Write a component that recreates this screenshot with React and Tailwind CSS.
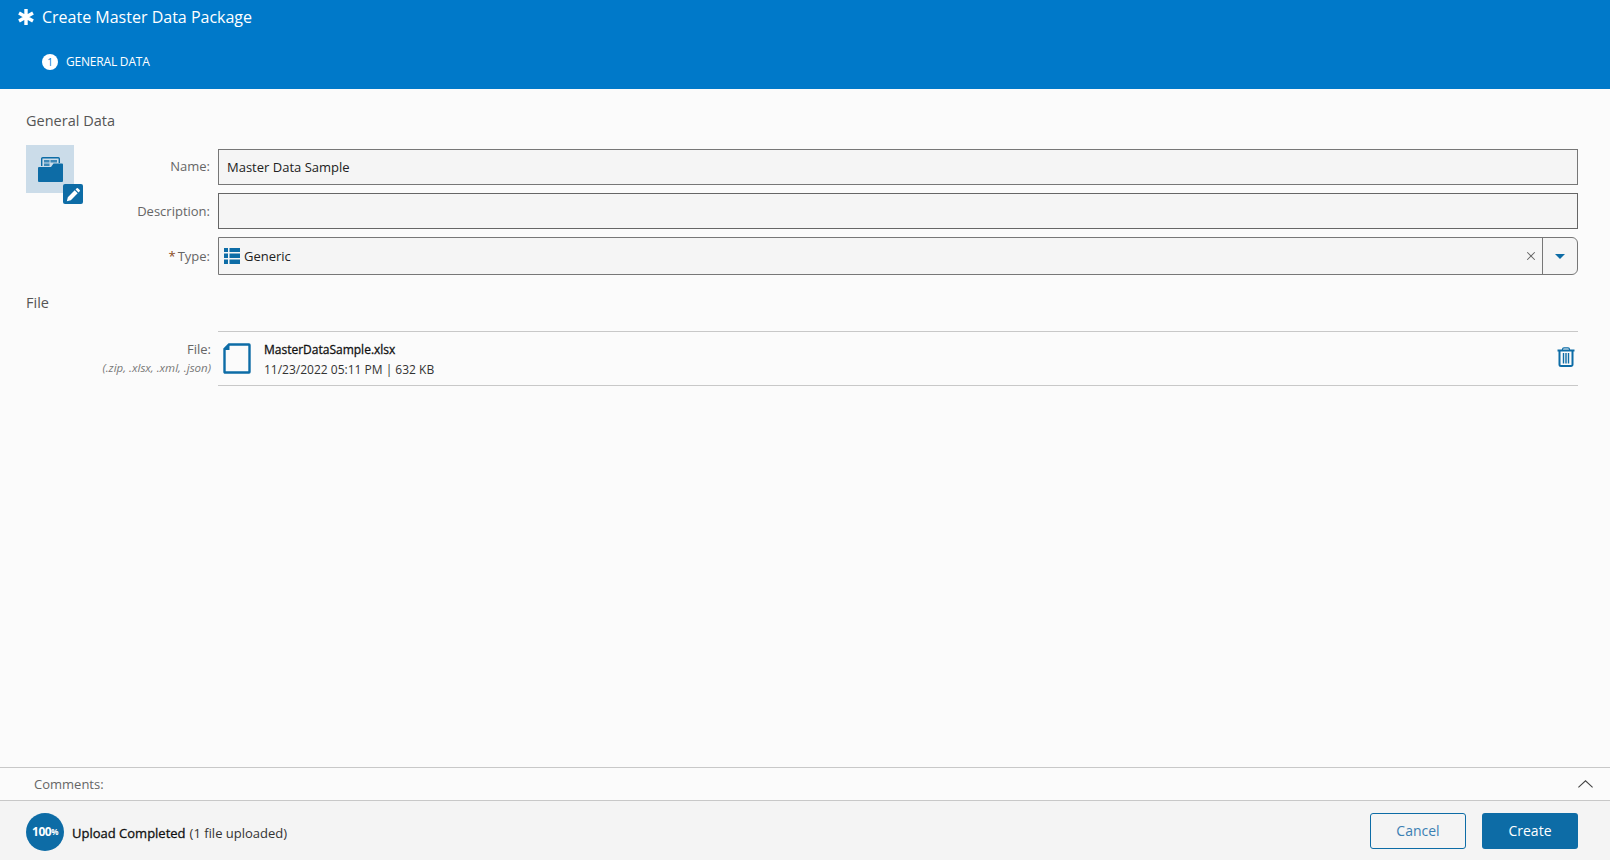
import React from 'react'
import { X } from 'lucide-react'

const font = 'font-["Open_Sans","Noto_Sans",sans-serif]'

function FormRow({ label, required, className, children, labelClass = '' }) {
  return (
    <div className={`flex items-center ${className}`}>
      <label className={`w-[128px] pr-2 text-right text-[13px] text-[#666] ${labelClass}`}>
        {required && <span className="mr-0.5 text-[#8a4b20]">*</span>}
        {label}
      </label>
      <div className="flex-1">{children}</div>
    </div>
  )
}

function FolderIcon() {
  return (
    <svg width="25" height="25" viewBox="0 0 25 25">
      <path d="M3.700 9V1.700A1 1 0 0 1 4.700.7h15.600a1 1 0 0 1 1 1V6" fill="none" stroke="#0d6ca6" strokeWidth="1.400" />
      <path d="M6 3h5.500v2.500H6zM12.500 3H19v2.500h-6.500zM6 6.500h5.500V9H6z" fill="#0d6ca6" opacity="0.75" />
      <path d="M0 11a1 1 0 0 1 1-1h12l2.500-3.500H24a1 1 0 0 1 1 1V24a1 1 0 0 1-1 1H1a1 1 0 0 1-1-1z" fill="#0d6ca6" />
    </svg>
  )
}

function PencilIcon() {
  return (
    <svg width="15" height="15" viewBox="0 0 14 14" fill="#fff">
      <path d="M10 1.200a.8.800 0 0 1 1.100 0l1.700 1.700a.8.800 0 0 1 0 1.100l-1.100 1.100-2.800-2.800zM8.100 3.100l2.800 2.800-6.400 6.400-3.700.9.900-3.700z" />
    </svg>
  )
}

function ListIcon() {
  return (
    <svg width="16" height="16" viewBox="0 0 16 16" fill="#0d6ca6">
      <path d="M0 0h4v4H0zM5.500 0H16v4H5.500zM0 5.500h4v4.500H0zM5.500 5.500H16v4.500H5.500zM0 11.500h4V16H0zM5.500 11.500H16V16H5.500z" />
    </svg>
  )
}

function FileIcon() {
  return (
    <svg width="28" height="31" viewBox="0 0 28 31" fill="none">
      <path d="M6 1.500h20a.5.500 0 0 1 .5.500v27a.5.500 0 0 1-.5.500H2a.5.500 0 0 1-.5-.500V6z" stroke="#0d6ca6" strokeWidth="2.400" />
      <path d="M1 7 6.500 1.500V7z" fill="#0d6ca6" />
    </svg>
  )
}

function TrashIcon() {
  return (
    <svg width="18" height="20" viewBox="0 0 18 20" fill="none" stroke="#0d6ca6">
      <path d="M5.500 3V2.200A1.500 1.500 0 0 1 7 .8h4a1.500 1.500 0 0 1 1.500 1.400V3" strokeWidth="1.200" />
      <path d="M.5 3.500h17" strokeWidth="2" />
      <path d="M2.500 4v13.500a1.500 1.500 0 0 0 1.500 1.500h10a1.500 1.500 0 0 0 1.500-1.500V4" strokeWidth="2" />
      <path d="M6.500 6v10.500M9 6v10.500M11.500 6v10.500" strokeWidth="1.400" />
    </svg>
  )
}

export default function App() {
  return (
    <div className={`flex h-[860px] w-full flex-col overflow-hidden bg-[#fbfbfb] ${font}`}>
      <header className="h-[89px] shrink-0 bg-[#0079c9] text-white">
        <div className="flex h-[34px] items-center pl-[18px]">
          <svg width="16" height="16" viewBox="0 0 16 16" stroke="#fff" strokeWidth="3.400">
            <path d="M8 0v16M1 4l14 8M15 4 1 12" />
          </svg>
          <h1 className="ml-2 text-[16px]">Create Master Data Package</h1>
        </div>
        <div className="mt-[19px] flex items-center pl-[42px]">
          <span className="flex h-4 w-4 items-center justify-center rounded-full bg-white text-[10px] text-[#0079c9]">1</span>
          <span className="ml-2 text-[12px] tracking-[-0.2px]">GENERAL DATA</span>
        </div>
      </header>

      <main className="flex-1 pl-[26px] pr-8">
        <h2 className="mt-[22px] text-[14.5px] leading-5 text-[#555]">General Data</h2>
        <div className="mt-[14px] flex">
          <div className="relative h-12 w-12 shrink-0">
            <div className="flex h-12 w-12 items-center justify-center bg-[#cbdce9]">
              <FolderIcon />
            </div>
            <div className="absolute left-[37px] top-[39px] flex h-5 w-5 items-center justify-center rounded-[2px] bg-[#0d6ca6]">
              <PencilIcon />
            </div>
          </div>
          <div className="ml-[16px] flex-1 pt-1">
            <FormRow label="Name:">
              <input
                readOnly
                value="Master Data Sample"
                className="h-9 w-full border border-[#777] bg-[#f5f5f5] px-2 text-[13px] text-[#222] outline-none"
              />
            </FormRow>
            <FormRow label="Description:" className="mt-2" labelClass="pt-[2px]">
              <input readOnly className="h-9 w-full border border-[#666] bg-[#f5f5f5] px-2 text-[13px] outline-none" />
            </FormRow>
            <FormRow label="Type:" required className="mt-2" labelClass="pt-[2px]">
              <div className="flex h-[38px] w-full items-center rounded-r-[6px] border border-[#777] bg-[#f5f5f5]">
                <span className="ml-[5px]"><ListIcon /></span>
                <span className="ml-1 flex-1 pt-[2px] text-[13px] text-[#222]">Generic</span>
                <X size={14} strokeWidth={1.800} className="mr-[4px] text-[#666]" />
                <div className="flex h-full w-[35px] items-center justify-center border-l border-[#777]">
                  <span className="h-0 w-0 border-x-[5px] border-t-[5px] border-x-transparent border-t-[#0d6ca6]" />
                </div>
              </div>
            </FormRow>
          </div>
        </div>

        <h2 className="mt-[18px] text-[14.5px] leading-5 text-[#555]">File</h2>
        <div className="mt-[18px] flex">
          <div className="w-[192px] shrink-0 pr-[7px] pt-[9px] text-right">
            <div className="text-[13px] leading-[18px] text-[#666]">File:</div>
            <div className="mt-[2px] whitespace-nowrap text-[11.5px] italic leading-4 text-[#777]">(.zip, .xlsx, .xml, .json)</div>
          </div>
          <div className="flex h-[55px] flex-1 items-center border-y border-[#c8c8c8] pl-[5px]">
            <FileIcon />
            <div className="ml-[13px] flex-1 pt-[2px]">
              <div className="text-[12px] font-medium leading-[18px] text-[#111] [-webkit-text-stroke:0.3px_#111]">MasterDataSample.xlsx</div>
              <div className="mt-[2px] text-[12px] leading-[18px] text-[#333]">11/23/2022 05:11 PM | 632 KB</div>
            </div>
            <span className="mb-[4px] mr-[3px]"><TrashIcon /></span>
          </div>
        </div>
      </main>

      <div className="flex h-[34px] shrink-0 items-center justify-between border-y border-[#c8c8c8] pl-[34px] pr-[17px]">
        <span className="pt-[2px] text-[13px] text-[#666]">Comments:</span>
        <svg width="15" height="8" viewBox="0 0 15 8" fill="none" stroke="#444" strokeWidth="1.100">
          <path d="M.4 7.400 7.500.8l7.100 6.600" />
        </svg>
      </div>

      <footer className="flex h-[59px] shrink-0 items-center justify-between bg-[#f4f4f4] pl-[26px] pr-8">
        <div className="mt-[3px] flex items-center">
          <span className="flex h-[38px] w-[38px] items-center justify-center rounded-full bg-[#0d6ca6] text-[12px] font-bold tracking-[-0.5px] text-white">
            100<span className="text-[8px]">%</span>
          </span>
          <span className="ml-2 mt-[4px] text-[13px] font-medium text-[#111] [-webkit-text-stroke:0.3px_#111]">Upload Completed</span>
          <span className="ml-1 mt-[4px] text-[13px] text-[#333]">(1 file uploaded)</span>
        </div>
        <div className="flex gap-4">
          <button className="h-9 w-[96px] rounded-[3px] border border-[#0d6ca6] text-[14px] text-[#3b7fb3]">Cancel</button>
          <button className="h-9 w-[96px] rounded-[3px] bg-[#0d6ca6] text-[14px] text-white">Create</button>
        </div>
      </footer>
    </div>
  )
}
